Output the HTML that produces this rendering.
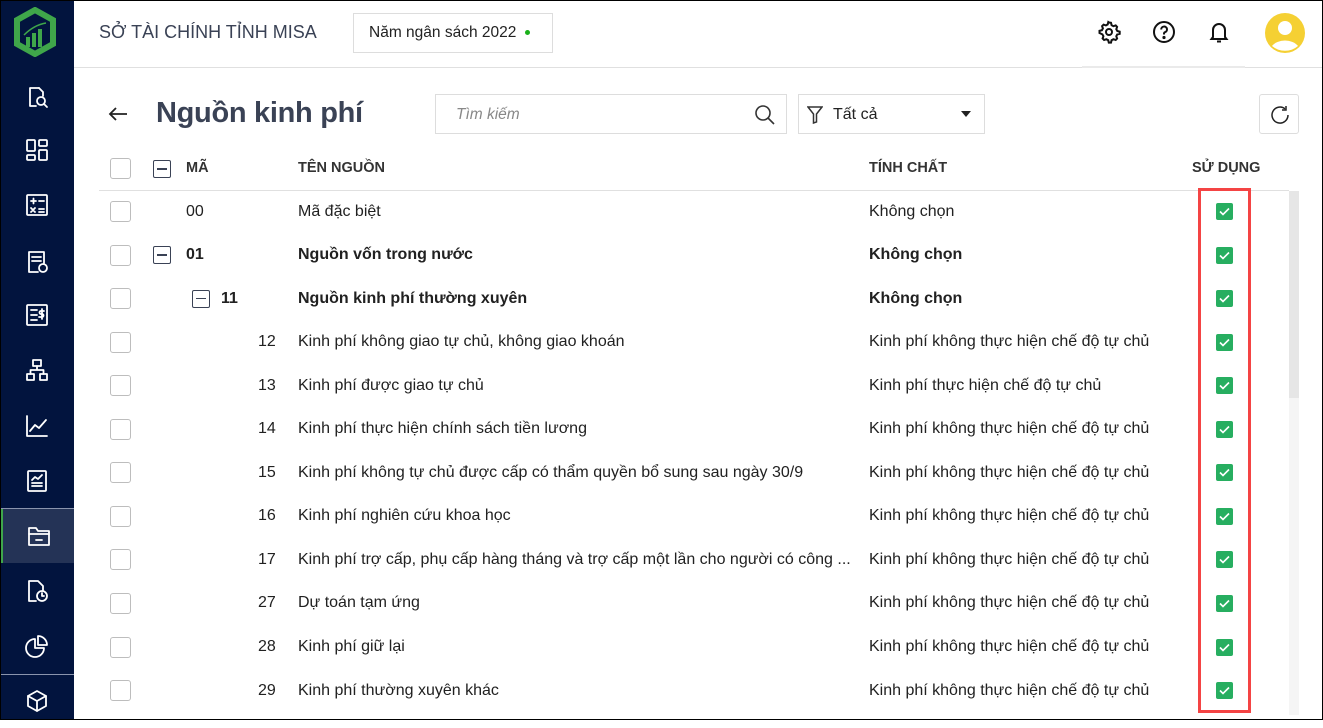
<!DOCTYPE html>
<html><head><meta charset="utf-8"><style>
*{margin:0;padding:0;box-sizing:border-box}
body{width:1323px;height:720px;overflow:hidden;font-family:"Liberation Sans",sans-serif;background:#fff;position:relative;color:#212121}
#frame{position:absolute;inset:0;border:1px solid #000;pointer-events:none;z-index:10}
#side{position:absolute;left:0;top:0;width:74px;height:720px;background:#02143e}
.si{position:absolute;left:0;width:74px;height:54px;display:flex;align-items:center;justify-content:center}
.si svg{width:26px;height:26px;fill:none;stroke:#fff;stroke-width:1.8;stroke-linecap:round;stroke-linejoin:round}
.abs{position:absolute}
#hdr{position:absolute;left:74px;top:0;right:0;height:68px;border-bottom:1px solid #e0e0e0}
.cb{position:absolute;left:110px;width:21px;height:21px;border:1px solid #bdbdbd;border-radius:3px;background:#fff}
.mn{position:absolute;width:18px;height:18px;border:1.5px solid #3a4255;border-radius:2px}
.mn:after{content:"";position:absolute;left:3px;right:3px;top:7px;height:1.5px;background:#3a4255}
.row{position:absolute;left:0;right:0;height:43px;font-size:16px}
.row span{position:absolute;top:50%;transform:translateY(-50%);white-space:nowrap}
.ok{position:absolute;left:1216px;width:17px;height:17px;background:#27ae60;border-radius:2px}
.ok svg{position:absolute;left:3px;top:4px}
.th{position:absolute;top:160px;font-size:14.5px;font-weight:bold;color:#333}
</style></head><body>
<div id="frame"></div>
<div id="side">
 <svg class="abs" style="left:12px;top:7px" width="46" height="50" viewBox="0 0 46 50"><path d="M23 3 L41 13 L41 37 L23 47 L5 37 L5 13 Z" fill="none" stroke="#3fa64a" stroke-width="6"/><rect x="14" y="30" width="4" height="10" fill="#3fa64a"/><rect x="20" y="26" width="4" height="14" fill="#3fa64a"/><rect x="26" y="22" width="4" height="18" fill="#3fa64a"/><path d="M12 28 Q22 18 34 16" stroke="#3fa64a" stroke-width="1.5" fill="none"/></svg>
 <div class="si" style="top:70px"><svg viewBox="0 0 26 26"><path d="M15 4H6v18h6"/><path d="M15 4l4 4v4"/><circle cx="17" cy="17" r="4"/><path d="M20 20l3 3"/></svg></div>
 <div class="si" style="top:123px"><svg viewBox="0 0 26 26"><rect x="3" y="3" width="8" height="11" rx="1"/><rect x="15" y="3" width="8" height="6" rx="1"/><rect x="3" y="18" width="8" height="5" rx="1"/><rect x="15" y="13" width="8" height="10" rx="1"/></svg></div>
 <div class="si" style="top:178px"><svg viewBox="0 0 26 26"><rect x="3" y="3" width="20" height="20" rx="1"/><path d="M7 9h5M9.5 6.5v5M15 9h5M7 16l4 4M11 16l-4 4M15 17h5M15 20h5"/></svg></div>
 <div class="si" style="top:235px"><svg viewBox="0 0 26 26"><path d="M5 3h15v11M5 3v20h9"/><path d="M8 8h9M8 12h9"/><circle cx="19" cy="19" r="4"/></svg></div>
 <div class="si" style="top:288px"><svg viewBox="0 0 26 26"><rect x="3" y="3" width="20" height="20" rx="1"/><path d="M7 8h6M7 13h6M7 18h6M20 9h-3a1.5 1.5 0 0 0 0 3h1a1.5 1.5 0 0 1 0 3h-3M18 7v10"/></svg></div>
 <div class="si" style="top:343px"><svg viewBox="0 0 26 26"><rect x="9" y="3" width="8" height="6"/><rect x="3" y="17" width="7" height="6"/><rect x="16" y="17" width="7" height="6"/><path d="M13 9v4M6.5 17v-4h13v4"/></svg></div>
 <div class="si" style="top:399px"><svg viewBox="0 0 26 26"><path d="M3 3v20h20"/><path d="M6 18l5-6 4 3 7-8"/></svg></div>
 <div class="si" style="top:454px"><svg viewBox="0 0 26 26"><rect x="4" y="3" width="18" height="20" rx="1"/><path d="M8 12l3-3 3 2 4-4M8 15h10M8 18h10"/></svg></div>
 <div style="position:absolute;left:0;top:508px;width:74px;height:1px;background:#8a94ad"></div>
 <div class="si" style="top:509px;background:#243356;border-left:3px solid #3fa64a"><svg viewBox="0 0 26 26"><path d="M3 5h7l2 3h11v14H3z"/><path d="M3 11h20M10 17h6"/></svg></div>
 <div class="si" style="top:564px"><svg viewBox="0 0 26 26"><path d="M12 23H5V3h9l5 5v4"/><circle cx="18" cy="18" r="5"/><path d="M18 15v3h2"/></svg></div>
 <div class="si" style="top:619px"><svg viewBox="0 0 26 26"><path d="M11 6a9 9 0 1 0 9 9h-9z"/><path d="M14 3a9 9 0 0 1 9 9h-9z"/></svg></div>
 <div style="position:absolute;left:0;top:674px;width:74px;height:1px;background:#8a94ad"></div>
 <div class="si" style="top:674px"><svg viewBox="0 0 26 26"><path d="M13 3l9 5v10l-9 5-9-5V8z"/><path d="M4 8l9 5 9-5M13 13v10"/></svg></div>
</div>
<div id="hdr">
 <div class="abs" style="left:25px;top:22px;font-size:18px;color:#3a4255">SỞ TÀI CHÍNH TỈNH MISA</div>
 <div class="abs" style="left:279px;top:13px;width:200px;height:40px;border:1px solid #ddd;font-size:15.5px;padding:10px 0 0 15px;color:#222">Năm ngân sách 2022 <span style="display:inline-block;width:5px;height:5px;border-radius:50%;background:#1ab01a;margin-left:4px;vertical-align:middle"></span></div>
 <svg class="abs" style="left:1023px;top:20px" width="24" height="24" viewBox="0 0 24 24" fill="none" stroke="#111" stroke-width="2"><circle cx="12" cy="12" r="3"/><path d="M12 2.5l2 .3.6 2.4 1.8 1 2.3-.8 1.4 1.5-.8 2.3 1 1.8 2.4.6v2.2l-2.4.6-1 1.8.8 2.3-1.4 1.5-2.3-.8-1.8 1-.6 2.4h-2.2l-.6-2.4-1.8-1-2.3.8-1.5-1.5.8-2.3-1-1.8L2.5 13v-2.2l2.4-.6 1-1.8-.8-2.3 1.5-1.5 2.3.8 1.8-1 .6-2.4z"/></svg>
 <svg class="abs" style="left:1078px;top:20px" width="24" height="24" viewBox="0 0 24 24" fill="none" stroke="#111" stroke-width="2"><circle cx="12" cy="12" r="10"/><path d="M9.2 9.5a2.9 2.9 0 1 1 3.8 2.7c-.7.3-1 .8-1 1.6v.7"/><circle cx="12" cy="17.5" r=".6" fill="#111"/></svg>
 <svg class="abs" style="left:1133px;top:20px" width="24" height="24" viewBox="0 0 24 24" fill="none" stroke="#111" stroke-width="2"><path d="M6 17V10a6 6 0 0 1 12 0v7l1.5 2h-15z"/><path d="M10 21.5h4"/></svg>
 <svg class="abs" style="left:1191px;top:13px" width="40" height="40" viewBox="0 0 40 40"><circle cx="20" cy="20" r="20" fill="#f5d033"/><circle cx="20" cy="15" r="7" fill="#fff"/><path d="M7 33a15 11 0 0 1 26 0a20 20 0 0 1-26 0z" fill="#fff"/></svg>
 <div class="abs" style="left:1008px;top:66px;width:163px;height:2px;background:#eaeaea"></div>
</div>
<svg class="abs" style="left:107px;top:104px" width="22" height="20" viewBox="0 0 22 20" fill="none" stroke="#222" stroke-width="1.8"><path d="M20 10H3M9 4l-6 6 6 6"/></svg>
<div class="abs" style="left:156px;top:97px;font-size:29px;font-weight:bold;color:#3a4255;letter-spacing:-0.3px">Nguồn kinh phí</div>
<div class="abs" style="left:435px;top:94px;width:352px;height:40px;border:1px solid #ddd;font-size:15.5px;font-style:italic;color:#888;padding:11px 0 0 20px">Tìm kiếm
 <svg class="abs" style="left:318px;top:9px" width="22" height="22" viewBox="0 0 22 22" fill="none" stroke="#333" stroke-width="1.6"><circle cx="9" cy="9" r="7"/><path d="M14 14l6 6"/></svg></div>
<div class="abs" style="left:798px;top:94px;width:187px;height:40px;border:1px solid #ddd;font-size:16px;color:#222;padding:11px 0 0 34px">Tất cả
 <svg class="abs" style="left:8px;top:11px" width="16" height="18" viewBox="0 0 16 18" fill="none" stroke="#333" stroke-width="1.5"><path d="M1 1h14l-5.5 7v8L6.5 17V8z"/></svg>
 <div class="abs" style="left:162px;top:16px;border-left:5px solid transparent;border-right:5px solid transparent;border-top:6px solid #222"></div></div>
<div class="abs" style="left:1259px;top:94px;width:40px;height:40px;border:1px solid #ddd;border-radius:3px">
 <svg class="abs" style="left:9px;top:9px" width="22" height="22" viewBox="0 0 22 22" fill="none" stroke="#222" stroke-width="1.5"><path d="M19 11a8 8 0 1 1-3-6.2"/><path d="M17 2v4h-4"/></svg></div>
<div class="cb" style="top:158px"></div>
<div class="mn" style="left:153px;top:160px"></div>
<div class="th" style="left:186px">MÃ</div>
<div class="th" style="left:298px">TÊN NGUỒN</div>
<div class="th" style="left:869px">TÍNH CHẤT</div>
<div class="th" style="left:1192px">SỬ DỤNG</div>
<div class="abs" style="left:99px;top:190px;width:1190px;height:1px;background:#e0e0e0"></div>
<div class="abs" style="left:1289px;top:191px;width:10px;height:524px;background:#f5f5f5"></div>
<div class="abs" style="left:1289px;top:191px;width:10px;height:207px;background:#e6e6e6"></div>
<div id="rows"></div>
<div class="abs" style="left:1198px;top:188px;width:53px;height:525px;border:3px solid #f44444"></div>
<script>
const d=[["00",186,"Mã đặc biệt","Không chọn",0],["01",186,"Nguồn vốn trong nước","Không chọn",1,153],["11",221,"Nguồn kinh phí thường xuyên","Không chọn",1,192],
["12",258,"Kinh phí không giao tự chủ, không giao khoán","Kinh phí không thực hiện chế độ tự chủ",0],
["13",258,"Kinh phí được giao tự chủ","Kinh phí thực hiện chế độ tự chủ",0],
["14",258,"Kinh phí thực hiện chính sách tiền lương","Kinh phí không thực hiện chế độ tự chủ",0],
["15",258,"Kinh phí không tự chủ được cấp có thẩm quyền bổ sung sau ngày 30/9","Kinh phí không thực hiện chế độ tự chủ",0],
["16",258,"Kinh phí nghiên cứu khoa học","Kinh phí không thực hiện chế độ tự chủ",0],
["17",258,"Kinh phí trợ cấp, phụ cấp hàng tháng và trợ cấp một lần cho người có công ...","Kinh phí không thực hiện chế độ tự chủ",0],
["27",258,"Dự toán tạm ứng","Kinh phí không thực hiện chế độ tự chủ",0],
["28",258,"Kinh phí giữ lại","Kinh phí không thực hiện chế độ tự chủ",0],
["29",258,"Kinh phí thường xuyên khác","Kinh phí không thực hiện chế độ tự chủ",0]];
let h="";d.forEach((r,i)=>{const c=211.5+i*43.55;const b=r[4]?"font-weight:bold;":"";
h+=`<div class="cb" style="top:${c-10.5}px"></div>`;
if(r[5])h+=`<div class="mn" style="left:${r[5]}px;top:${c-9}px"></div>`;
h+=`<div class="row" style="top:${c-21.5}px;${b}"><span style="left:${r[1]}px">${r[0]}</span><span style="left:298px">${r[2]}</span><span style="left:869px">${r[3]}</span></div>`;
h+=`<div class="ok" style="top:${c-8.5}px"><svg width="11" height="9" viewBox="0 0 11 9" fill="none" stroke="#fff" stroke-width="1.6"><path d="M1 4.5l3 3 6-6"/></svg></div>`;});
document.getElementById("rows").innerHTML=h;
</script>
</body></html>
